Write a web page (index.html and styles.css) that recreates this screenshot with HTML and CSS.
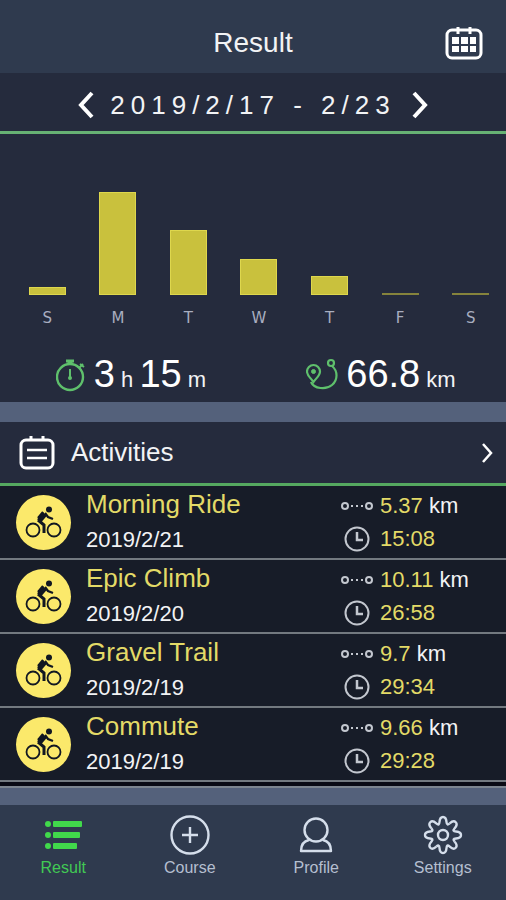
FILE: index.html
```
<!DOCTYPE html>
<html lang="en">
<head>
    <meta charset="UTF-8">
    <meta name="viewport" content="width=device-width, initial-scale=1.0">
    <title>Result</title>
    <link rel="stylesheet" href="styles.css">
</head>
<body>
    <!-- shared icons -->
    <svg class="sprite" aria-hidden="true">
        <symbol id="bike" viewBox="0 0 55 55">
            <g fill="none" stroke="#111722">
                <circle cx="17" cy="35" r="6.500" stroke-width="1.800"/>
                <circle cx="38" cy="35" r="6.500" stroke-width="1.800"/>
                <path d="M23 26 L29 19" stroke-width="5"/>
                <path d="M22 25 L28 30 V38" stroke-width="3"/>
                <path d="M22 23 L27 17 M29 18 L32 22 L37 24" stroke-width="2.200"/>
            </g>
            <circle cx="33" cy="14.500" r="3" fill="#111722"/>
        </symbol>
        <symbol id="distance" viewBox="0 0 34 12">
            <circle cx="5" cy="6" r="3" fill="none" stroke="#c3c7cf" stroke-width="2"/>
            <circle cx="29" cy="6" r="3" fill="none" stroke="#c3c7cf" stroke-width="2"/>
            <path d="M11 6h2M16 6h2M21 6h2" stroke="#c3c7cf" stroke-width="2"/>
        </symbol>
        <symbol id="clock" viewBox="0 0 26 26">
            <circle cx="13" cy="13" r="11.500" fill="none" stroke="#c3c7cf" stroke-width="2"/>
            <path d="M13 6v8h6" fill="none" stroke="#c3c7cf" stroke-width="2.500"/>
        </symbol>
        <symbol id="tooth" viewBox="0 0 40 40">
            <path d="M16.500 7 C16.700 4 17.300 2 20 2 S23.300 4 23.500 7 C23.700 10 24.800 10 26.700 8.300" fill="none" stroke="#d5deeb" stroke-width="2.400"/>
        </symbol>
    </svg>

    <header class="header">
        <h1>Result</h1>
        <button type="button" class="icon-btn" aria-label="Calendar">
            <svg width="38" height="34" viewBox="0 0 38 34" fill="none" stroke="#fff">
                <rect x="2" y="4" width="34" height="28" rx="5" stroke-width="3"/>
                <path d="M13 1v7M25 1v7" stroke-width="3"/>
                <g fill="#fff" stroke="none">
                    <rect x="7" y="11" width="7" height="7"/>
                    <rect x="16" y="11" width="7" height="7"/>
                    <rect x="25" y="11" width="6" height="7"/>
                    <rect x="7" y="20" width="7" height="6"/>
                    <rect x="16" y="20" width="7" height="6"/>
                    <rect x="25" y="20" width="6" height="6"/>
                </g>
            </svg>
        </button>
    </header>

    <main>
        <div class="week">
            <button type="button" class="icon-btn" aria-label="Previous week">
                <svg width="16" height="28" viewBox="0 0 16 28" fill="none" stroke="#fff" stroke-width="4"><path d="M14 2 L3 14 L14 26"/></svg>
            </button>
            <span class="week-range">2019/2/17 - 2/23</span>
            <button type="button" class="icon-btn" aria-label="Next week">
                <svg width="16" height="28" viewBox="0 0 16 28" fill="none" stroke="#fff" stroke-width="4"><path d="M2 2 L13 14 L2 26"/></svg>
            </button>
        </div>

        <section class="summary">
            <div class="chart">
                <div class="day"><div class="bar" style="height: 8px"></div><span>S</span></div>
                <div class="day"><div class="bar" style="height: 103px"></div><span>M</span></div>
                <div class="day"><div class="bar" style="height: 65px"></div><span>T</span></div>
                <div class="day"><div class="bar" style="height: 36px"></div><span>W</span></div>
                <div class="day"><div class="bar" style="height: 19px"></div><span>T</span></div>
                <div class="day"><div class="bar empty"></div><span>F</span></div>
                <div class="day"><div class="bar empty"></div><span>S</span></div>
            </div>
            <div class="stats">
                <div class="stat">
                    <svg width="30" height="38" viewBox="0 0 30 38" fill="none" stroke="#5fc06c">
                        <circle cx="14" cy="19" r="13" stroke-width="2.400"/>
                        <path d="M10 3h8" stroke-width="3"/>
                        <path d="M14 3v4" stroke-width="5"/>
                        <path d="M23 10l4-4M24 6l4 3" stroke-width="2"/>
                        <path d="M14 11v10" stroke-width="2"/>
                        <circle cx="14" cy="20" r="1" stroke-width="2"/>
                    </svg>
                    <p><b>3</b> h <b>15</b> m</p>
                </div>
                <div class="stat">
                    <svg width="32" height="38" viewBox="0 0 32 38" fill="none" stroke="#5fc06c" stroke-width="2.200">
                        <path d="M7.500 24 C5 20 1 18 1 13.500 A6.300 6.300 0 0 1 14 13.500 C14 18 10 20 7.500 24z"/>
                        <circle cx="7.500" cy="13.500" r="2" fill="#5fc06c" stroke-width="1"/>
                        <circle cx="25" cy="5" r="3"/>
                        <path d="M5 24 C8 31 20 32 26 27 C32 22 32 13 26 8"/>
                    </svg>
                    <p><b>66.8</b> km</p>
                </div>
            </div>
        </section>

        <section class="activities">
            <a href="#" class="activities-head">
                <svg width="36" height="34" viewBox="0 0 36 34" fill="none" stroke="#fff" stroke-width="3">
                    <rect x="2" y="4" width="32" height="28" rx="5"/>
                    <path d="M12 0v5M24 0v5"/>
                    <path d="M8 14h20M8 22h20" stroke-width="2.500"/>
                </svg>
                <h2>Activities</h2>
                <svg width="12" height="20" viewBox="0 0 12 20" fill="none" stroke="#fff" stroke-width="2.500"><path d="M2 1 L10 10 L2 19"/></svg>
            </a>
            <ul class="list">
                <li class="row">
                    <svg class="avatar"><use href="#bike"/></svg>
                    <div class="info"><h3>Morning Ride</h3><p>2019/2/21</p></div>
                    <div class="data">
                        <svg width="34" height="12"><use href="#distance"/></svg><p><em>5.37</em> km</p>
                        <svg width="26" height="26"><use href="#clock"/></svg><p><em>15:08</em></p>
                    </div>
                </li>
                <li class="row">
                    <svg class="avatar"><use href="#bike"/></svg>
                    <div class="info"><h3>Epic Climb</h3><p>2019/2/20</p></div>
                    <div class="data">
                        <svg width="34" height="12"><use href="#distance"/></svg><p><em>10.11</em> km</p>
                        <svg width="26" height="26"><use href="#clock"/></svg><p><em>26:58</em></p>
                    </div>
                </li>
                <li class="row">
                    <svg class="avatar"><use href="#bike"/></svg>
                    <div class="info"><h3>Gravel Trail</h3><p>2019/2/19</p></div>
                    <div class="data">
                        <svg width="34" height="12"><use href="#distance"/></svg><p><em>9.7</em> km</p>
                        <svg width="26" height="26"><use href="#clock"/></svg><p><em>29:34</em></p>
                    </div>
                </li>
                <li class="row">
                    <svg class="avatar"><use href="#bike"/></svg>
                    <div class="info"><h3>Commute</h3><p>2019/2/19</p></div>
                    <div class="data">
                        <svg width="34" height="12"><use href="#distance"/></svg><p><em>9.66</em> km</p>
                        <svg width="26" height="26"><use href="#clock"/></svg><p><em>29:28</em></p>
                    </div>
                </li>
            </ul>
        </section>
    </main>

    <nav class="tabs">
        <a href="#" class="tab active">
            <svg width="40" height="40" viewBox="0 0 40 40" fill="#41d94b">
                <circle cx="5" cy="9" r="3"/><rect x="10" y="6" width="29" height="6" rx="1"/>
                <circle cx="5" cy="20" r="3"/><rect x="10" y="17" width="27" height="6" rx="1"/>
                <circle cx="5" cy="31" r="3"/><rect x="10" y="28" width="24" height="6" rx="1"/>
            </svg>
            Result
        </a>
        <a href="#" class="tab">
            <svg width="40" height="40" viewBox="0 0 40 40" fill="none" stroke="#d5deeb" stroke-width="2.400">
                <circle cx="20" cy="20" r="18.500"/>
                <path d="M20 12v16M12 20h16"/>
            </svg>
            Course
        </a>
        <a href="#" class="tab">
            <svg width="40" height="40" viewBox="0 0 40 40" fill="none" stroke="#d5deeb" stroke-width="2.400">
                <circle cx="20" cy="15" r="11.500"/>
                <path d="M13 25 C8 26 5 30 5 36 H35 C35 30 32 26 27 25" stroke-linejoin="round"/>
            </svg>
            Profile
        </a>
        <a href="#" class="tab">
            <svg width="40" height="40" viewBox="0 0 40 40" fill="none" stroke="#d5deeb" stroke-width="2.400">
                <circle cx="20" cy="20" r="5"/>
                <use href="#tooth"/>
                <use href="#tooth" transform="rotate(45 20 20)"/>
                <use href="#tooth" transform="rotate(90 20 20)"/>
                <use href="#tooth" transform="rotate(135 20 20)"/>
                <use href="#tooth" transform="rotate(180 20 20)"/>
                <use href="#tooth" transform="rotate(225 20 20)"/>
                <use href="#tooth" transform="rotate(270 20 20)"/>
                <use href="#tooth" transform="rotate(315 20 20)"/>
            </svg>
            Settings
        </a>
    </nav>
</body>
</html>
```
FILE: styles.css
```
* {
    box-sizing: border-box;
}
body {
    margin: 0;
    min-height: 100vh;
    display: flex;
    flex-direction: column;
    font-family: "Liberation Sans", Arial, sans-serif;
    background-color: #2f3a4e;
    color: #f2f3f5;
}
h1, h2, h3, p, ul {
    margin: 0;
    padding: 0;
    font-weight: normal;
}
a {
    color: inherit;
    text-decoration: none;
}
svg {
    display: block;
    flex: none;
}
.sprite {
    display: none;
}
.icon-btn {
    padding: 0;
    border: none;
    background: none;
    cursor: pointer;
}
.header {
    display: grid;
    grid-template-columns: 1fr auto 1fr;
    align-items: center;
    height: 73px;
    padding: 12px 23px 0;
}
.header h1 {
    grid-column: 2;
    font-size: 28px;
}
.header .icon-btn {
    justify-self: end;
}
.week {
    display: flex;
    justify-content: center;
    align-items: center;
    gap: 16px;
    height: 61px;
    padding-top: 6px;
    background-color: #252b3d;
    border-bottom: 3px solid #67b274;
}
.week-range {
    font-size: 26px;
    letter-spacing: 6px;
}
.summary {
    background-color: #252b3d;
    border-bottom: 20px solid #54617b;
}
.chart {
    display: grid;
    grid-template-columns: repeat(7, 1fr);
    align-items: end;
    padding: 58px 0 0 12px;
}
.day {
    text-align: center;
    font-family: "DejaVu Sans", Verdana, sans-serif;
    font-size: 15px;
    line-height: 20px;
    color: #a9aec0;
}
.bar {
    width: 37px;
    margin: 0 auto 13px;
    background-color: #c9c13d;
    border: 1px solid #ded74d;
}
.bar.empty {
    height: 2px;
    border: none;
    background-color: #85833c;
}
.stats {
    display: grid;
    grid-template-columns: 1fr 1fr;
    padding: 24px 0 0 6px;
}
.stat {
    display: flex;
    justify-content: center;
    align-items: center;
    gap: 8px;
}
.stat p {
    font-size: 22px;
    line-height: 44px;
}
.stat b {
    font-size: 38px;
    font-weight: normal;
    color: #fff;
}
.activities {
    background-color: #171c28;
    border-bottom: 17px solid #54617b;
}
.activities-head {
    display: flex;
    align-items: center;
    gap: 16px;
    height: 64px;
    padding: 0 13px 0 19px;
    background-color: #252b3d;
    border-bottom: 3px solid #55a860;
}
.activities-head h2 {
    flex: 1;
    font-size: 26px;
}
.list {
    list-style: none;
    padding-bottom: 4px;
    background-color: #090a14;
    border-bottom: 2px solid #7d8590;
}
.row {
    display: grid;
    grid-template-columns: 55px 1fr 150px;
    column-gap: 15px;
    align-items: center;
    height: 74px;
    padding: 0 16px;
    background-color: #171c28;
    border-bottom: 2px solid #737980;
}
.avatar {
    width: 55px;
    height: 55px;
    border-radius: 50%;
    background-color: #fbe96b;
}
.info h3 {
    font-size: 26px;
    line-height: 36px;
    color: #e3da67;
}
.info p {
    font-size: 22px;
    line-height: 36px;
}
.data {
    display: grid;
    grid-template-columns: 34px 1fr;
    column-gap: 6px;
    align-items: center;
    justify-items: center;
    font-size: 22px;
    line-height: 33px;
}
.data p {
    justify-self: start;
}
.data em {
    font-style: normal;
    color: #e3da67;
}
.tabs {
    display: grid;
    grid-template-columns: repeat(4, 1fr);
    padding-top: 10px;
}
.tab {
    display: flex;
    flex-direction: column;
    align-items: center;
    gap: 3px;
    font-size: 16px;
    line-height: 20px;
    color: #b5bfd0;
}
.tab.active {
    color: #41c954;
}
```
